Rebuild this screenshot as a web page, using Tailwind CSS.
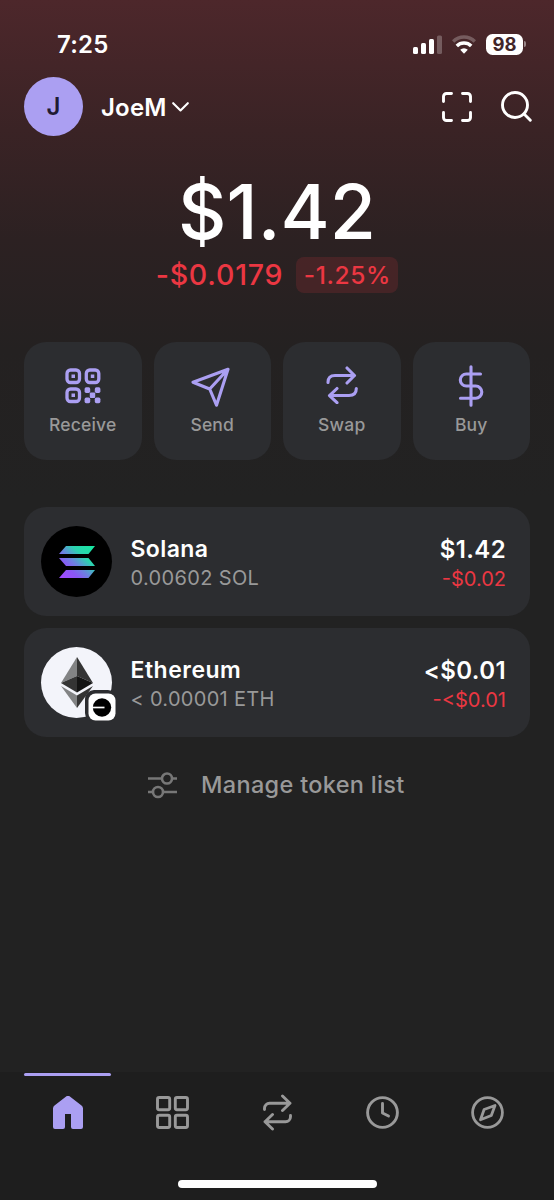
<!DOCTYPE html>
<html lang="en">
<head>
<meta charset="utf-8">
<meta name="viewport" content="width=device-width, initial-scale=1">
<title>Wallet</title>
<script src="https://cdn.jsdelivr.net/npm/@tailwindcss/browser@4"></script>
</head>
<body class="bg-[#222222]">
<div class="flex h-[1200px] w-[554px] flex-col overflow-hidden bg-[#222222] bg-[linear-gradient(180deg,#4d272b_0px,#3a2325_130px,#2c2122_240px,#242121_350px,#222222_500px)] font-['Inter',sans-serif] text-white">

  <!-- Status bar -->
  <div class="flex h-[76px] items-start justify-between pt-[32px] pr-[28px] pl-[57px]">
    <div class="mt-[1px] h-6 text-[24px] leading-6 font-semibold tracking-[0.2px] whitespace-nowrap">7:25</div>
    <div class="flex h-6 items-center">
      <svg class="mr-[9px] h-[19px] w-[30px]" viewBox="0 0 30 19" fill="#fff"><rect x="0" y="12" width="5" height="7" rx="1.5"/><rect x="8" y="8" width="5" height="11" rx="1.5"/><rect x="16" y="4" width="5" height="15" rx="1.5"/><rect x="24" y="0.500" width="5" height="18.500" rx="1.500" opacity=".25"/></svg>
      <svg class="mr-[10px] h-[19px] w-[24px]" viewBox="0 0 24 19" fill="none" stroke="#fff" stroke-width="3.500"><path d="M1.200 6.500a15.500 15.500 0 0 1 21.600 0" opacity=".25"/><path d="M4.800 10.900a10.300 10.300 0 0 1 14.400 0"/><path d="M8.200 14.800a5.500 5.500 0 0 1 7.600 0L12 18.800z" fill="#fff" stroke="none"/></svg>
      <div class="flex h-[21px] w-[37px] items-center justify-center rounded-[6.500px] bg-white text-[18.500px] leading-[21px] font-bold text-[#42262a]">98</div>
      <div class="ml-[1px] h-[6px] w-[2px] rounded-r-full bg-white/45"></div>
    </div>
  </div>

  <!-- Account header -->
  <div class="flex h-[61px] items-center pr-[22px] pl-6">
    <div class="flex size-[59px] items-center justify-center rounded-full bg-[#ab9ff2] pt-[1px] text-[24px] font-semibold text-[#1f1b33]">J</div>
    <div class="mt-[2px] ml-[18px] text-[24px] leading-6 font-semibold tracking-[0.200px]">JoeM</div>
    <svg class="ml-[5px] h-[10px] w-[17px]" viewBox="0 0 17 10" fill="none" stroke="#fff" stroke-width="2.100" stroke-linecap="round" stroke-linejoin="round"><path d="M1.200 1.200 8.500 8.500l7.300-7.300"/></svg>
    <svg class="ml-auto size-[30px]" viewBox="0 0 30 30" fill="none" stroke="#fff" stroke-width="2.900" stroke-linecap="round"><path d="M1.500 9.500V4.500a3 3 0 0 1 3-3H9.500M20.500 1.500h5a3 3 0 0 1 3 3V9.500M28.500 20.500v5a3 3 0 0 1-3 3H20.500M9.500 28.500H4.500a3 3 0 0 1-3-3V20.500"/></svg>
    <svg class="ml-[29px] size-[31px]" viewBox="0 0 31 31" fill="none" stroke="#fff" stroke-width="2.900" stroke-linecap="round"><circle cx="14" cy="14" r="12.500"/><path d="m23.300 23.300 6 6"/></svg>
  </div>

  <!-- Balance -->
  <div class="mt-[38px] flex h-[74px] items-center justify-center text-[75px] leading-[74px] font-medium">$1.42</div>
  <div class="mt-[8px] flex h-[36px] items-center justify-center gap-[13px] text-[#eb3742]">
    <div class="text-[28.500px] leading-9 font-medium tracking-[0.800px]">-$0.0179</div>
    <div class="flex h-[36px] w-[102px] items-center justify-center rounded-[8px] bg-[#eb3742]/15 pt-[1px] text-[24.500px] font-medium tracking-[0.600px]">-1.25%</div>
  </div>

  <!-- Actions -->
  <div class="mt-[49px] grid h-[118px] grid-cols-4 gap-3 px-6 text-[17.500px] leading-5 font-medium text-[#999999]">
    <div class="flex flex-col items-center rounded-[22px] bg-[#2c2d30] pt-[26px]">
      <svg class="h-[36px] w-[36px]" viewBox="0 0 36 36" fill="#ab9ff2"><g fill="none" stroke="#ab9ff2" stroke-width="3.300"><rect x="2" y="2" width="12.500" height="12.500" rx="3.500"/><rect x="21.300" y="2" width="12.500" height="12.500" rx="3.500"/><rect x="2" y="21" width="12.500" height="12.500" rx="3.500"/></g><rect x="6.500" y="6.500" width="3.500" height="3.500"/><rect x="25.800" y="6.500" width="3.500" height="3.500"/><rect x="6.500" y="25.500" width="3.500" height="3.500"/><rect x="19.600" y="19.300" width="5.600" height="5.600" rx="1.600"/><rect x="29.800" y="19.300" width="5.600" height="5.600" rx="1.600"/><rect x="24.800" y="24.500" width="5.400" height="5.400" rx="1"/><rect x="19.600" y="29.600" width="5.600" height="5.600" rx="1.600"/><rect x="29.800" y="29.600" width="5.600" height="5.600" rx="1.600"/></svg>
      <div class="mt-[11px] tracking-[0.200px]">Receive</div>
    </div>
    <div class="flex flex-col items-center rounded-[22px] bg-[#2c2d30] pt-[25px]">
      <svg class="ml-[-3px] h-[40px] w-[39px]" viewBox="0 0 39 40" fill="none" stroke="#ab9ff2" stroke-width="3.100" stroke-linejoin="round" stroke-linecap="round"><path d="M37 2.300 2 15.200l16.700 6.800L25.500 38.200zM37 2.300 18.700 22"/></svg>
      <div class="mt-[8px] tracking-[0.200px]">Send</div>
    </div>
    <div class="flex flex-col items-center rounded-[22px] bg-[#2c2d30] pt-[24px]">
      <svg class="h-[38px] w-[32px]" viewBox="0 0 32 38" fill="none" stroke="#ab9ff2" stroke-width="3.100" stroke-linejoin="round" stroke-linecap="round"><path d="M2 16.500C2 12 4.500 9.500 9 9.500H28.500M21 2 28.500 9.500 21 17M30.300 22.500c0 4.500-2.800 7-7.300 7H3.500M11 22.500 3.500 29.700l7.500 7"/></svg>
      <div class="mt-[11px] tracking-[0.200px]">Swap</div>
    </div>
    <div class="flex flex-col items-center rounded-[22px] bg-[#2c2d30] pt-[23px]">
      <svg class="h-[42px] w-[26px]" viewBox="0 0 26 42" fill="none" stroke="#ab9ff2" stroke-width="3.100" stroke-linejoin="round" stroke-linecap="round"><path d="M13 1.800v38.400M22.500 9H8.300a6 6 0 0 0 0 12h9.400a6.100 6.100 0 0 1 0 12.200H2.500"/></svg>
      <div class="mt-[8px] tracking-[0.200px]">Buy</div>
    </div>
  </div>

  <!-- Tokens -->
  <div class="mt-[47px] flex flex-col gap-3 px-6">
    <div class="flex h-[109px] items-center rounded-[22px] bg-[#2c2d30] pr-[24px] pl-[17px]">
      <div class="flex size-[71px] items-center justify-center rounded-full bg-black">
        <svg class="h-[32px] w-[36px]" viewBox="0 0 36 32"><defs><linearGradient id="sol" gradientUnits="userSpaceOnUse" x1="33" y1="1" x2="4" y2="32"><stop offset="0" stop-color="#19e6a2"/><stop offset=".3" stop-color="#2cd3b0"/><stop offset=".55" stop-color="#6b83e0"/><stop offset=".75" stop-color="#8b57f5"/><stop offset="1" stop-color="#a04bff"/></linearGradient></defs><path fill="url(#sol)" d="M7 0h29l-6.500 8H0zM0 12h29.500l6.500 8H7zM7 24h29l-6.500 8H0z"/></svg>
      </div>
      <div class="ml-[18.500px] flex flex-col pt-[4px]">
        <div class="text-[23px] leading-[30px] font-semibold tracking-[0.400px]">Solana</div>
        <div class="text-[20px] leading-[29px] tracking-[0.350px] text-[#999999]">0.00602 SOL</div>
      </div>
      <div class="ml-auto flex flex-col items-end pt-[5px]">
        <div class="text-[24px] leading-[30px] font-semibold tracking-[0.400px]">$1.42</div>
        <div class="text-[20px] leading-[29px] text-[#eb3742]">-$0.02</div>
      </div>
    </div>
    <div class="flex h-[109px] items-center rounded-[22px] bg-[#2c2d30] pr-[24px] pl-[17px]">
      <div class="relative flex size-[71px] items-center justify-center rounded-full bg-[#f3f4fa]">
        <svg class="h-[51px] w-[32px]" viewBox="0 0 32 51"><path fill="#828384" d="M16 0 0 26l16-7z"/><path fill="#343434" d="M16 0v19l16 7z"/><path fill="#343434" d="M16 19 0 26l16 9.500z"/><path fill="#141414" d="M16 19v16.500L32 26z"/><path fill="#828384" d="m0 29 16 9.500V51z"/><path fill="#343434" d="M32 29 16 38.500V51z"/></svg>
        <svg class="absolute top-[43px] left-[44px] size-[32px]" viewBox="0 0 32 32"><rect width="32" height="32" rx="9" fill="#2c2d30"/><rect x="3.500" y="3.500" width="27" height="27" rx="7" fill="#fff"/><circle cx="17" cy="17.500" r="9.200" fill="#000"/><path d="M7 17.500h12.500" stroke="#fff" stroke-width="1.700"/></svg>
      </div>
      <div class="ml-[18.500px] flex flex-col pt-[4px]">
        <div class="text-[23px] leading-[30px] font-semibold tracking-[0.500px]">Ethereum</div>
        <div class="text-[20px] leading-[29px] tracking-[0.300px] text-[#999999]">&lt; 0.00001 ETH</div>
      </div>
      <div class="ml-auto flex flex-col items-end pt-[5px]">
        <div class="text-[24px] leading-[30px] font-semibold tracking-[0.400px]">&lt;$0.01</div>
        <div class="text-[20px] leading-[29px] text-[#eb3742]">-&lt;$0.01</div>
      </div>
    </div>
  </div>

  <div class="mt-[32px] flex h-8 items-center pl-[147px] text-[#999999]">
    <svg class="h-[27px] w-[31px]" viewBox="0 0 31 27" fill="none" stroke="#777" stroke-width="2.600"><path d="M1 6.500h14M25 6.500h5M1 20h5M16 20h14"/><circle cx="20" cy="6.500" r="5"/><circle cx="11" cy="20" r="5"/></svg>
    <div class="ml-[23px] text-[23.500px] leading-8 font-medium tracking-[0.320px] whitespace-nowrap">Manage token list</div>
  </div>

  <!-- Tab bar -->
  <div class="mt-auto flex h-[128px] flex-col bg-[#1e1e1e] pr-[14px] pl-[15px]">
    <div class="grid h-[108px] grid-cols-5 justify-items-center">
      <div class="flex w-[87px] flex-col items-center">
        <div class="mt-[1px] h-[3px] w-full rounded-full bg-[#ab9ff2]"></div>
        <svg class="mt-[20px] h-[33px] w-[30px]" viewBox="0 0 30 33"><path fill="#ab9ff2" d="M12.800.8a3.300 3.300 0 0 1 4.400 0l11.300 8.700A4 4 0 0 1 30 12.600V31a2 2 0 0 1-2 2h-8a2 2 0 0 1-2-2V18h-6v13a2 2 0 0 1-2 2H2a2 2 0 0 1-2-2V12.600a4 4 0 0 1 1.500-3.100z"/></svg>
      </div>
      <svg class="mt-[24px] h-[33px] w-[33px]" viewBox="0 0 33 33" fill="none" stroke="#999" stroke-width="2.900"><rect x="1.500" y="1.500" width="12.200" height="12.200" rx="1.700"/><rect x="19.300" y="1.500" width="12.200" height="12.200" rx="1.700"/><rect x="1.500" y="19.300" width="12.200" height="12.200" rx="1.700"/><rect x="19.300" y="19.300" width="12.200" height="12.200" rx="1.700"/></svg>
      <svg class="mt-[22px] h-[37px] w-[29px]" viewBox="0 0 29 37" fill="none" stroke="#999" stroke-width="2.900" stroke-linejoin="round" stroke-linecap="round"><path d="M1.500 15.500v-1.300a5 5 0 0 1 5-5H27M19.500 2 27 9.200l-7.500 7.300M27.500 21.500v1.300a5 5 0 0 1-5 5H2M9.500 20.500 2 27.800 9.500 35"/></svg>
      <svg class="mt-[24px] h-[33px] w-[33px]" viewBox="0 0 33 33" fill="none" stroke="#999" stroke-width="2.900" stroke-linejoin="round" stroke-linecap="round"><circle cx="16.500" cy="16.500" r="14.900"/><path d="M16.500 7.500v9.500l6 3"/></svg>
      <svg class="mt-[24px] h-[33px] w-[33px]" viewBox="0 0 33 33" fill="none" stroke="#999" stroke-width="2.800" stroke-linejoin="round"><circle cx="16.500" cy="16.500" r="14.900"/><path d="m24 9.500-3.700 10L9.500 23.800l3.600-10.300z"/></svg>
    </div>
    <div class="h-[8px] w-[199px] self-center rounded-full bg-white"></div>
  </div>
</div>
</body>
</html>
